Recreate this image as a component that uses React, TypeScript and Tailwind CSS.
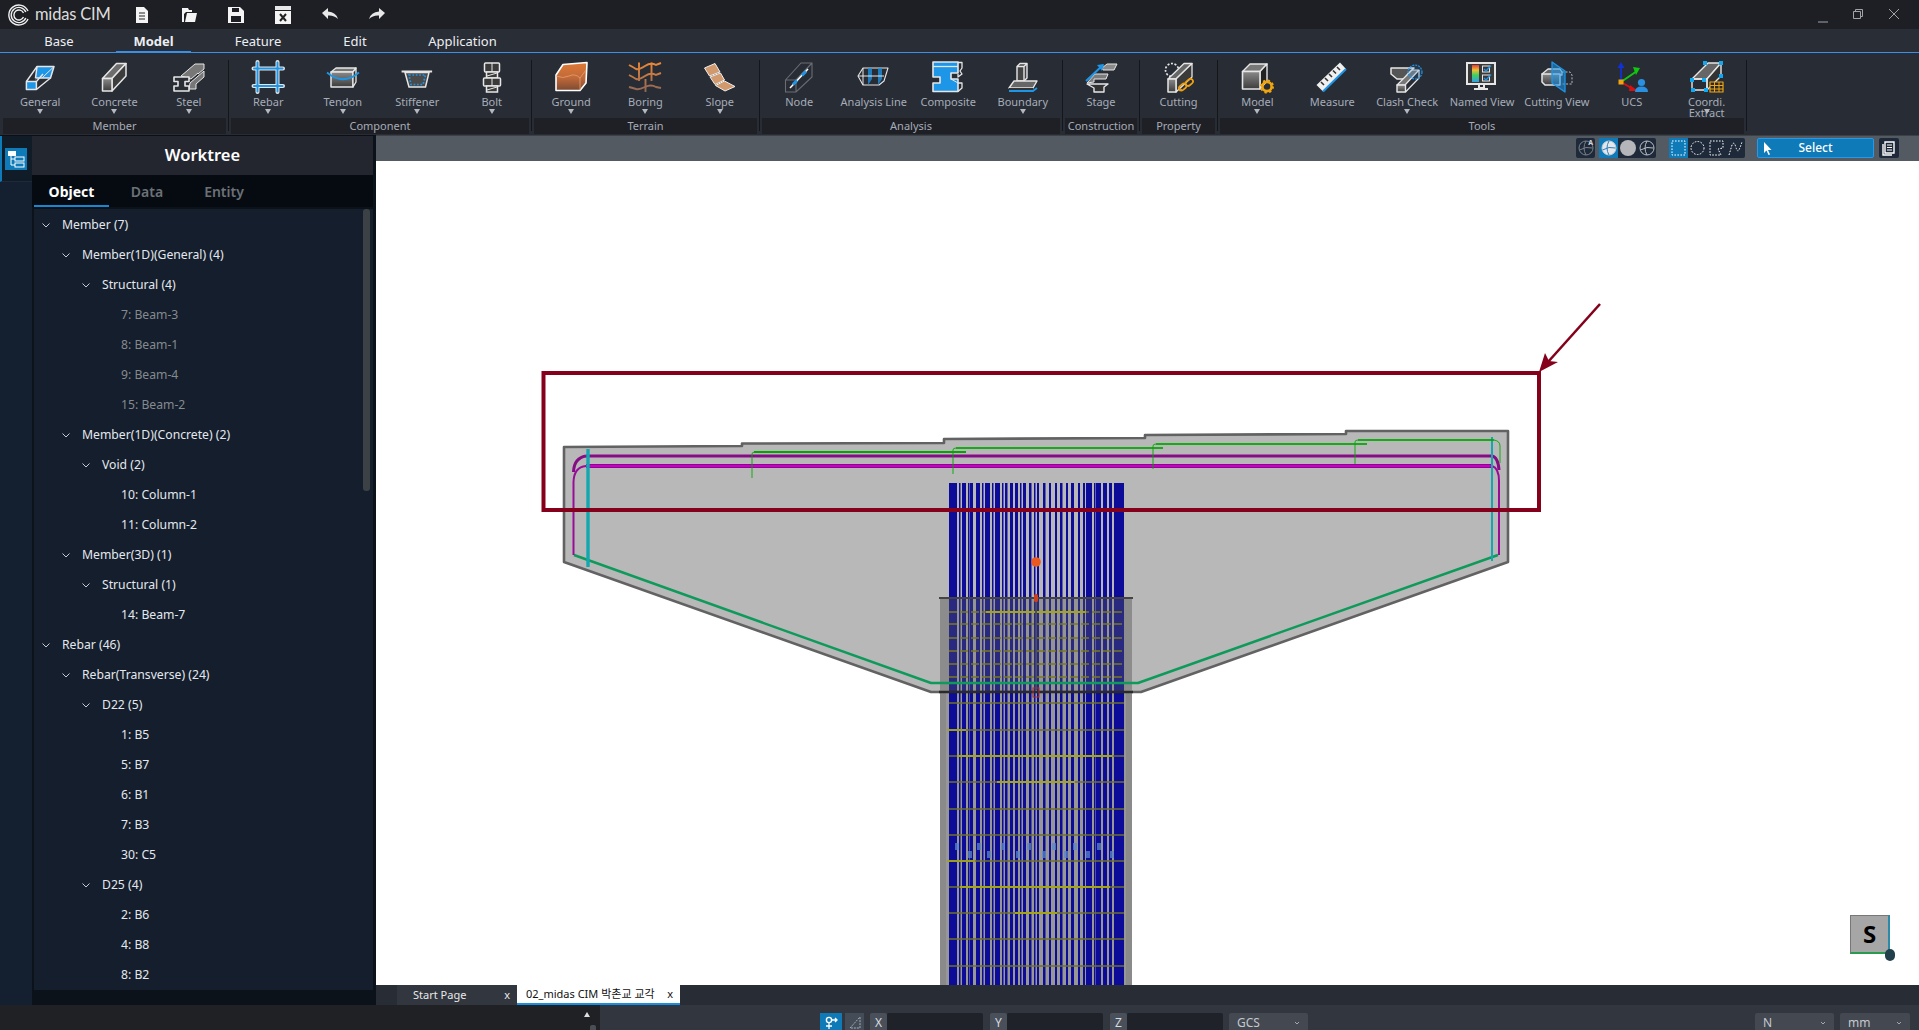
import React from "react";

const W = "#e6e6e6";
const B = "#1e96e8";
const G = "url(#gr)";

const Defs = () => (
  <svg className="absolute w-0 h-0">
    <defs>
      <linearGradient id="gr" x1="0" y1="0" x2="0" y2="1">
        <stop offset="0" stopColor="#8a8a8a" />
        <stop offset="1" stopColor="#3c3c3c" />
      </linearGradient>
      <linearGradient id="gnd" x1="0" y1="0" x2="0" y2="1">
        <stop offset="0" stopColor="#e07a35" />
        <stop offset="0.55" stopColor="#c0693a" />
        <stop offset="1" stopColor="#7c4a30" />
      </linearGradient>
      <linearGradient id="bor" gradientUnits="userSpaceOnUse" x1="0" y1="0" x2="0" y2="32">
        <stop offset="0" stopColor="#ef8a35" />
        <stop offset="1" stopColor="#8a6458" />
      </linearGradient>
      <linearGradient id="rain" x1="0" y1="0" x2="0" y2="1">
        <stop offset="0" stopColor="#e83a3a" />
        <stop offset="0.3" stopColor="#f0c030" />
        <stop offset="0.6" stopColor="#40d060" />
        <stop offset="1" stopColor="#30a0e8" />
      </linearGradient>
    </defs>
  </svg>
);

const icons: Record<string, React.ReactNode> = {
  General: (
    <g strokeLinejoin="round">
      <path d="M14 5.5H31L27.5 17H12.5Z" fill={B} stroke={W} strokeWidth="1.5" />
      <path d="M30.5 6L19 17" stroke={W} strokeWidth="1" />
      <path d="M3.4 20.5L14 5.5M13.4 28.5L27.5 17M13.4 20.5L20 13" fill="none" stroke={W} strokeWidth="1.4" />
      <path d="M13.4 20.5L12.5 17" stroke="#777" strokeWidth="1" />
      <rect x="3.4" y="20.5" width="10" height="8" fill={B} stroke={W} strokeWidth="1.5" />
    </g>
  ),
  Concrete: (
    <g strokeLinejoin="round" stroke={W} strokeWidth="1.5">
      <path d="M5.5 17.5L19.5 2.5H29L15 17.5Z" fill="#6d6d6d" />
      <path d="M15 17.5L29 2.5V15L15 30Z" fill="#3d3d3d" />
      <rect x="5.5" y="17.5" width="9.5" height="12.5" fill={G} />
    </g>
  ),
  Steel: (
    <g strokeLinejoin="round">
      <path d="M9 15L23 3H32V8L26 13V12L19 18ZM18 22L32 10V16L24 23L24 28H17Z" fill="#777" stroke={W} strokeWidth="1" />
      <path d="M2 16H17V20.5H13V25H17V30H2V25H6V20.5H2Z" fill="#2a2d33" stroke={W} strokeWidth="1.6" />
    </g>
  ),
  Rebar: (
    <g strokeLinecap="round" fill="none">
      <path d="M2.5 7.5H32M2.5 25H32M6.5 1V31M26.5 1V31" stroke={W} strokeWidth="4" />
      <path d="M3 7.5H31.5M3 25H31.5M6.5 1.5V30.5M26.5 1.5V30.5" stroke={B} strokeWidth="2" />
    </g>
  ),
  Tendon: (
    <g strokeLinejoin="round">
      <path d="M5 11L10 7H30L27 11Z" fill="#777" stroke={W} strokeWidth="1.3" />
      <path d="M5 11H27V26H5Z" fill={G} stroke={W} strokeWidth="1.5" />
      <path d="M27 11L30 7V21L27 26Z" fill="#333" stroke={W} strokeWidth="1.3" />
      <path d="M1 11.5Q17 25 33 11.5" fill="none" stroke={B} strokeWidth="1.8" />
    </g>
  ),
  Stiffener: (
    <g>
      <rect x="1.6" y="9.5" width="30.5" height="2" fill={W} />
      <path d="M5 11.5H29L25.5 26H9Z" fill="#4a4a4a" stroke={W} strokeWidth="1.5" />
      <path d="M9 14H25.5L23 23.5H11Z" fill="none" stroke={B} strokeWidth="1.7" strokeDasharray="1.7 1.7" />
    </g>
  ),
  Bolt: (
    <g fill="#3a3a3a" stroke={W} strokeWidth="1.5">
      <rect x="9.5" y="2" width="15" height="9" rx="1" />
      <path d="M17 2V11" strokeWidth="1" />
      <rect x="11.5" y="11" width="11" height="6" />
      <path d="M12 15L22 12" strokeWidth="1" />
      <rect x="8.5" y="17" width="17" height="8" rx="1" />
      <path d="M17 17V25" strokeWidth="1" />
      <rect x="11.5" y="25" width="11" height="6" />
      <path d="M12 29L22 26" strokeWidth="1" />
    </g>
  ),
  Ground: (
    <g strokeLinejoin="round">
      <path d="M9 3.5L33 1.5L32 22L26 29.5H2V14Z" fill="url(#gnd)" stroke="#fff" strokeWidth="1.6" />
      <path d="M2 15Q9 18 15 15T26 17L32 9M26 17V29" fill="none" stroke="#e8a070" strokeWidth="0.8" />
    </g>
  ),
  Boring: (
    <g fill="none" stroke="url(#bor)" strokeWidth="1.9">
      <path d="M1 4Q5 6 8 8Q11 9 17 5T28 4L33 2M1 14Q5 16 8 18Q11 19 17 15T28 14L33 12M1 26Q5 27 8 28Q11 29 17 26T28 26L33 27" />
      <path d="M11 1.5V20M23.5 1.5V20M17.5 18V31" />
    </g>
  ),
  Slope: (
    <g fill="#d29a6c" stroke="#f0f0f0" strokeWidth="1">
      <path d="M1.5 7L12 2.5L17 11L6.5 15Z" />
      <path d="M7 16L17.5 12L21.5 19L12 23.5Z" />
      <path d="M12.5 24.5L21.5 20L32 25.5L22 30Z" />
    </g>
  ),
  Node: (
    <g fill="none">
      <path d="M3.5 19L19 2H30V16L14 31H3.5ZM3.5 19H14V31M14 19L30 2" stroke="#6a6d72" strokeWidth="1.1" />
      <path d="M8 27L26 8" stroke="#fff" strokeWidth="1.5" />
      <path d="M11 23.5L15 19.5M20 14.5L24 10.5" stroke={B} strokeWidth="3" />
    </g>
  ),
  "Analysis Line": (
    <g fill="none" strokeLinejoin="round">
      <path d="M1 15L6 7H31L27 20L22 24H6Z" stroke={W} strokeWidth="1.1" />
      <path d="M11 7V24L15 18V7ZM21 7V24L25 18V7Z" fill={B} fillOpacity=".75" />
      <path d="M1 15H27M6 7L6 24" stroke={W} strokeWidth="1" />
    </g>
  ),
  Composite: (
    <g strokeLinejoin="round">
      <path d="M27 1.5H31V7L29 10L31 13L27 16V13M27 22H31V27L27 30.5" fill="none" stroke={W} strokeWidth="1.3" />
      <path d="M2 1H27V12H20V18H27V30.5H2V22H9V16H2Z" fill={B} stroke={W} strokeWidth="1.6" />
      <path d="M2 5.5H27" stroke={W} strokeWidth="1.3" />
      <path d="M20 18L27 22" stroke={W} strokeWidth="1" />
    </g>
  ),
  Boundary: (
    <g strokeLinejoin="round" stroke={W} strokeWidth="1.4">
      <path d="M11 5.5L14 2.5H21V17L18 20H11Z" fill="#444" />
      <path d="M11 5.5H18V20M18 5.5L21 2.5" fill="none" />
      <path d="M3 27L8 20H31L27 27Z" fill="#666" />
      <path d="M3 27H27V30H3Z" fill="#333" strokeWidth="0" />
      <path d="M3 30H27L31 27" fill="none" stroke={B} strokeWidth="1.8" />
    </g>
  ),
  Stage: (
    <g strokeLinejoin="round">
      <path d="M18 7L23 3H33L30 9H19Z" fill="#8a8a8a" stroke={W} strokeWidth="1" />
      <path d="M3 22L11 13H24L22 18H10V21Z" fill="#7a7a7a" stroke={W} strokeWidth="1" />
      <path d="M3 23H24L20 26V31H10V27Z" fill="#333" stroke={W} strokeWidth="1.4" />
      <path d="M2 20L19 4" stroke={B} strokeWidth="2" />
      <path d="M13 4L20 3L18 10Z" fill={B} />
    </g>
  ),
  Cutting: (
    <g strokeLinejoin="round" fill="none">
      <circle cx="10" cy="9" r="6.5" stroke={W} strokeWidth="1.7" strokeDasharray="2 1.6" />
      <path d="M6 18L22 2.5H30L14 18Z" fill="#666" stroke={W} strokeWidth="1.3" />
      <path d="M14 18L30 2.5V16L14 31Z" fill="#3a3a3a" stroke={W} strokeWidth="1.3" />
      <rect x="6" y="18" width="8" height="13" fill={G} stroke={W} strokeWidth="1.5" />
      <path d="M20 28L17 30" stroke="#f0a010" strokeWidth="1" />
      <rect x="16.5" y="24" width="8" height="5" rx="2.5" transform="rotate(-40 20 26)" stroke="#f0a010" strokeWidth="1.7" />
      <rect x="23" y="19" width="8" height="5" rx="2.5" transform="rotate(-40 27 21)" stroke="#f0a010" strokeWidth="1.7" />
    </g>
  ),
  Model: (
    <g strokeLinejoin="round">
      <path d="M2.5 10.5L10 3H27L20 10.5Z" fill="#777" stroke={W} strokeWidth="1.4" />
      <path d="M20 10.5L27 3V20L20 28Z" fill="#222" stroke={W} strokeWidth="1.4" />
      <rect x="2.5" y="10.5" width="17.5" height="17.5" fill={G} stroke={W} strokeWidth="1.6" />
      <circle cx="27" cy="25.5" r="4.6" fill="none" stroke="#f0a510" strokeWidth="2.6" />
      <circle cx="27" cy="25.5" r="6" fill="none" stroke="#f0a510" strokeWidth="2" strokeDasharray="2.3 2.4" />
    </g>
  ),
  Measure: (
    <g>
      <path d="M1.5 24L25 1.5L31 8L8 30.5Z" fill="#f0f0f0" />
      <path d="M8 30.5L31 8" stroke={B} strokeWidth="2" />
      <path d="M6 21L9 24M10 17L13 20M14 13L17 16M18 9.5L21 12.5M22 6L25 9" stroke="#333" strokeWidth="1.6" />
    </g>
  ),
  "Clash Check": (
    <g strokeLinejoin="round">
      <path d="M1 7H24L18 13L14 18H7L1 13Z" fill="#555" stroke={W} strokeWidth="1.5" />
      <path d="M7 24L22 9H29L15 24Z" fill="#777" stroke={W} strokeWidth="1.2" />
      <rect x="7" y="24" width="8.5" height="7" fill={G} stroke={W} strokeWidth="1.4" />
      <path d="M15.5 31L29 17V9" fill="none" stroke={W} strokeWidth="1.2" />
      <circle cx="25" cy="11" r="7" fill="#1e96e8" fillOpacity=".15" stroke={B} strokeWidth="1.2" strokeDasharray="2 1" />
    </g>
  ),
  "Named View": (
    <g>
      <rect x="2" y="2" width="28" height="21" fill="#3a3a3a" stroke={W} strokeWidth="2" />
      <rect x="7" y="4" width="7" height="17" fill="url(#rain)" />
      <rect x="17.5" y="5" width="7" height="6" fill="none" stroke={W} strokeWidth="1" />
      <rect x="17.5" y="14" width="7" height="6" fill="none" stroke={W} strokeWidth="1" />
      <path d="M19 8L21 10L26 4.5M19 17L21 19L26 13.5" fill="none" stroke={B} strokeWidth="1.3" />
      <path d="M14 23V27H19V23M9 28H23" stroke={W} strokeWidth="2" fill="none" />
    </g>
  ),
  "Cutting View": (
    <g strokeLinejoin="round">
      <path d="M22 11H30L32 14V23H22" fill="none" stroke="#bbb" strokeWidth="1" strokeDasharray="2 1.5" />
      <path d="M2 13L8 8H20L22 11V14H4Z" fill="#666" stroke={W} strokeWidth="1.3" />
      <path d="M2 13H20V24H5L2 21Z" fill={G} stroke={W} strokeWidth="1.5" />
      <path d="M12 1L25 10V31L12 22Z" fill={B} fillOpacity=".55" stroke={B} strokeWidth="1.3" />
    </g>
  ),
  UCS: (
    <g fill="none">
      <path d="M6 21V4" stroke="#1030d8" strokeWidth="1.8" />
      <path d="M2.5 7L6 1L9.5 7Z" fill="#1030d8" />
      <path d="M6 21L22 10" stroke="#10c810" strokeWidth="2" />
      <path d="M18 6L25 7L21 14Z" fill="#10c810" />
      <path d="M6 21L18 28" stroke="#d81010" strokeWidth="2" />
      <path d="M15 24L23 30H14Z" fill="#d81010" />
      <rect x="3.5" y="18.5" width="5" height="5" fill="#f0a510" />
      <circle cx="26.5" cy="21.5" r="3.6" fill="#2a90e0" />
      <path d="M20 31Q20 25.5 26.5 25.5T33 31Z" fill="#2a90e0" />
    </g>
  ),
  "Coordi.": (
    <g strokeLinejoin="round">
      <path d="M2 18L18 2H31L17 18Z" fill="#666" stroke={W} strokeWidth="1.4" />
      <path d="M17 18L31 2V15L17 29Z" fill="#333" stroke={W} strokeWidth="1.4" />
      <rect x="2" y="18" width="15" height="11" fill="none" stroke={W} strokeWidth="1.4" />
      <g fill="#10a8f0">
        <rect x="13" y="0" width="4" height="4" />
        <rect x="29" y="0" width="4" height="4" />
        <rect x="29" y="13" width="4" height="4" />
        <rect x="0" y="17" width="4" height="4" />
        <rect x="12" y="17" width="4" height="4" />
        <rect x="1" y="27" width="4" height="4" />
        <rect x="14" y="27" width="4" height="4" />
      </g>
      <rect x="20" y="21" width="13" height="10" fill="#2a2a2a" stroke="#f0a510" strokeWidth="1.2" />
      <path d="M20 24.5H33M20 28H33M24.5 21V31M29 21V31" stroke="#f0a510" strokeWidth="1" />
    </g>
  ),
};

type Item = { n: string; a?: boolean };
const groups: { t: string; w: string; items: Item[] }[] = [
  { t: "Member", w: "w-[223px]", items: [{ n: "General", a: true }, { n: "Concrete", a: true }, { n: "Steel", a: true }] },
  { t: "Component", w: "w-[298px]", items: [{ n: "Rebar", a: true }, { n: "Tendon", a: true }, { n: "Stiffener", a: true }, { n: "Bolt", a: true }] },
  { t: "Terrain", w: "w-[223px]", items: [{ n: "Ground", a: true }, { n: "Boring", a: true }, { n: "Slope", a: true }] },
  { t: "Analysis", w: "w-[298px]", items: [{ n: "Node" }, { n: "Analysis Line" }, { n: "Composite" }, { n: "Boundary", a: true }] },
  { t: "Construction", w: "w-[72px]", items: [{ n: "Stage" }] },
  { t: "Property", w: "w-[73px]", items: [{ n: "Cutting" }] },
  { t: "Tools", w: "w-[524px]", items: [{ n: "Model", a: true }, { n: "Measure" }, { n: "Clash Check", a: true }, { n: "Named View" }, { n: "Cutting View" }, { n: "UCS" }, { n: "Coordi.", a: true }] },
];

const Arrow = () => (
  <svg width="6" height="5" viewBox="0 0 6 5" className="block">
    <path d="M0 0H6L3 5Z" fill="#b4b8c0" />
  </svg>
);

const RibbonItem = ({ it }: { it: Item }) => (
  <div className="flex-1 min-w-0 relative flex flex-col items-center pt-[8px]">
    <svg width="34" height="32" viewBox="0 0 34 32" className="block overflow-visible mb-[2px]">
      {icons[it.n]}
    </svg>
    {it.n === "Coordi." ? (
      <div className="h-[14px] pt-[1px] text-center text-[11px] leading-[11px] text-[#a6acb8] whitespace-nowrap">
        Coordi.
        <br />
        Extract
      </div>
    ) : (
      <div className="h-[14px] text-[11px] leading-[14px] text-[#a6acb8] whitespace-nowrap">{it.n}</div>
    )}
    {it.a && <Arrow />}
  </div>
);

const Sep = () => <div className="w-px mx-[2px] mt-[7px] h-[71px] bg-[#14161a]" />;

const tree: [number, string, boolean?][] = [
  [0, "Member (7)"],
  [1, "Member(1D)(General) (4)"],
  [2, "Structural (4)"],
  [3, "7: Beam-3", true],
  [3, "8: Beam-1", true],
  [3, "9: Beam-4", true],
  [3, "15: Beam-2", true],
  [1, "Member(1D)(Concrete) (2)"],
  [2, "Void (2)"],
  [3, "10: Column-1"],
  [3, "11: Column-2"],
  [1, "Member(3D) (1)"],
  [2, "Structural (1)"],
  [3, "14: Beam-7"],
  [0, "Rebar (46)"],
  [1, "Rebar(Transverse) (24)"],
  [2, "D22 (5)"],
  [3, "1: B5"],
  [3, "5: B7"],
  [3, "6: B1"],
  [3, "7: B3"],
  [3, "30: C5"],
  [2, "D25 (4)"],
  [3, "2: B6"],
  [3, "4: B8"],
  [3, "8: B2"],
];
const indent = ["pl-[6px]", "pl-[26px]", "pl-[46px]", "pl-[87px]"];

const Chevron = () => (
  <svg width="12" height="12" viewBox="0 0 12 12" className="mr-[10px] shrink-0">
    <path d="M2.5 4.5L6 8L9.5 4.5" fill="none" stroke="#c8ccd2" strokeWidth="1" />
  </svg>
);

const blue: [number, number][] = [
  [949, 8], [959, 1.5], [962, 4], [968, 1.5], [970, 3], [976, 4], [982, 1.5], [985, 5], [992, 1.5], [995, 5], [1002, 1.5],
  [1005, 2.5], [1010, 3], [1015, 3], [1020, 1.5], [1023, 3], [1029, 2.5], [1034, 1.5], [1037, 2], [1043, 2.5], [1049, 2],
  [1055, 2], [1060, 2.5], [1066, 2], [1071, 3], [1078, 2], [1083, 2], [1086, 6], [1094, 1.5], [1096, 5], [1103, 4], [1109, 3],
  [1114, 10],
];

const yel: [number, string, [number, number]?][] = [
  [612, "d", [986, 1086]], [624, "d"], [638, "d"], [651, "d"], [664, "d"], [677, "d"],
  [703, "s"], [730, "s", [947, 966]], [756, "s", [957, 1113]], [782, "s", [997, 1075]], [809, "s"], [835, "s"],
  [861, "s", [947, 975]], [887, "s", [960, 1110]], [913, "s", [1015, 1057]], [939, "s"], [966, "s"],
];

const marks = [955, 968, 977, 987, 1001, 1016, 1027, 1042, 1052, 1064, 1073, 1086, 1097, 1110];

const Scene = () => (
  <svg viewBox="376 161 1543 824" width="1543" height="824" className="absolute inset-0">
    <path
      d="M564 447L742 446L742 443.5L944 443L944 439L1145 438L1145 435L1346 434L1346 431L1508 431L1508 562L1141 692L931 692L564 562Z"
      fill="#b8b8b8"
      stroke="#626262"
      strokeWidth="2.6"
      strokeLinejoin="round"
    />
    <rect x="940" y="692" width="192" height="293" fill="#979797" />
    <rect x="940" y="692" width="6" height="293" fill="#8a8a8a" />
    <rect x="1126" y="692" width="6" height="293" fill="#8a8a8a" />
    {blue.map(([x, w]) => (
      <rect key={x} x={x} y="483" width={w} height="502" fill="#0c0c98" />
    ))}
    <rect x="940" y="598" width="192" height="94" fill="#5a5a5a" fillOpacity=".38" />
    <rect x="940" y="598" width="9" height="94" fill="#8c8c8c" />
    <rect x="1124" y="598" width="8" height="94" fill="#8c8c8c" />
    {yel.map(([y, k, b]) => (
      <g key={y}>
        <path
          d={`M949 ${y}H1124`}
          stroke={k === "d" ? "#7a7a20" : "#70702a"}
          strokeWidth="1.3"
          strokeDasharray={k === "d" ? "8 3" : undefined}
        />
        {b && <path d={`M${b[0]} ${y}H${b[1]}`} stroke="#a5a512" strokeWidth="1.8" />}
      </g>
    ))}
    {marks.map((x, i) => (
      <rect key={x} x={x} y={i % 2 ? 851 : 843} width="4" height="7" fill="#5a86c8" fillOpacity=".75" />
    ))}
    <path d="M1036 600V690" stroke="#3a3a55" strokeWidth="1.5" />
    <path d="M939 598H1133" stroke="#444" strokeWidth="2" />
    <path d="M939 692H1133" stroke="#2a2a2a" strokeWidth="2.4" />
    <path d="M574 555L931 683H1138L1498 555" fill="none" stroke="#0e9a5a" strokeWidth="2.4" strokeLinejoin="round" />
    <path d="M586 456H1492Q1498 457 1499 470" fill="none" stroke="#860c86" strokeWidth="3" />
    <path d="M586 456Q574 458 573.5 472" fill="none" stroke="#860c86" strokeWidth="3" />
    <path d="M573.5 555V482Q574 467 586 466H1492Q1499 468 1499 481V555" fill="none" stroke="#980c98" strokeWidth="2" />
    <path d="M586 466H1492" stroke="#7a0a7a" strokeWidth="4" />
    <path d="M586 466H1492" stroke="#c800c8" strokeWidth="2.4" />
    <path d="M588 449V567" stroke="#12a8b0" strokeWidth="3.4" />
    <path d="M1492 437V561" stroke="#12a8b0" strokeWidth="2" />
    <g fill="none" stroke="#00a800">
      <path d="M752 478V454Q752 452 755 452H966" strokeWidth="0.9" />
      <path d="M754 452H966" strokeWidth="2.2" />
      <path d="M953 474V450Q953 448 956 448H1163" strokeWidth="0.9" />
      <path d="M956 448H1163" strokeWidth="1.6" />
      <path d="M1153 469V446Q1153 444 1156 444H1367" strokeWidth="0.9" />
      <path d="M1156 444H1367" strokeWidth="1.6" />
      <path d="M1355 464V442Q1355 440 1358 440H1494Q1500 441 1500 446V463" strokeWidth="0.9" />
      <path d="M1358 440H1494" strokeWidth="1.6" />
    </g>
    <circle cx="1036" cy="562" r="4.8" fill="#e85a20" />
    <rect x="1034" y="594" width="4" height="8" rx="1.5" fill="#c8401e" />
    <rect x="1033" y="688" width="6" height="9" fill="none" stroke="#a03030" strokeWidth="1" />
    <rect x="543.5" y="373" width="995.5" height="137" fill="none" stroke="#85001a" strokeWidth="4" />
    <path d="M1600 304L1548 362" stroke="#85001a" strokeWidth="2.6" />
    <path d="M1539 372L1545 353L1549 361L1558 362Z" fill="#85001a" />
  </svg>
);

const Globe = ({ fill, c = "#c8ccd2" }: { fill?: string; c?: string }) => (
  <svg width="16" height="16" viewBox="0 0 16 16">
    <circle cx="8" cy="8" r="7" fill={fill ?? "none"} stroke={c} strokeWidth="1" />
    <path d="M1.5 10Q8 6 14.5 8M8 1Q4 8 8 15" fill="none" stroke={fill ? "#2a80bc" : c} strokeWidth="1" />
  </svg>
);

const TBtn = ({ children, on }: { children: React.ReactNode; on?: boolean }) => (
  <div className={`w-[19px] h-[20px] flex items-center justify-center ${on ? "bg-[#0f7ab8]" : ""}`}>{children}</div>
);

const Dot = ({ children }: { children: React.ReactNode }) => (
  <svg width="15" height="16" viewBox="0 0 15 16">
    <g fill="none" stroke="#fff" strokeWidth="1" strokeDasharray="1.6 1.4">
      {children}
    </g>
  </svg>
);

const TitleIcon = ({ children }: { children: React.ReactNode }) => (
  <svg width="18" height="18" viewBox="0 0 18 18" className="block">
    {children}
  </svg>
);

const Sel = ({ t, w }: { t: string; w: string }) => (
  <div className={`${w} h-[17px] bg-[#434851] rounded-t-[2px] flex items-center justify-between px-[8px] pt-[3px] text-[12px] text-[#c4c8ce]`}>
    <span>{t}</span>
    <svg width="6" height="4" viewBox="0 0 6 4">
      <path d="M1 1L3 3L5 1" fill="none" stroke="#b0b4ba" strokeWidth=".9" />
    </svg>
  </div>
);

const Coord = ({ t, w }: { t: string; w: string }) => (
  <div className={`flex h-[17px] ${w}`}>
    <div className="w-[17px] bg-[#4a505a] text-[12px] text-[#d8dce0] flex items-center justify-center pt-[3px] rounded-t-[2px]">{t}</div>
    <div className="flex-1 bg-[#1f2329] rounded-t-[2px]" />
  </div>
);

export default function App() {
  return (
    <div className="h-screen w-full overflow-hidden flex flex-col bg-[#1f2125] font-['Noto_Sans','Noto_Sans_CJK_KR',sans-serif] text-white">
      <Defs />
      {/* title bar */}
      <div className="h-[29px] shrink-0 bg-[#1d1f24] flex items-center">
        <svg width="24" height="24" viewBox="0 0 24 24" className="ml-[7px]">
          <g fill="none" stroke="#f0f0f0" strokeWidth="1.4">
            <path d="M21 8A10 10 0 1 0 21 16" />
            <path d="M18.8 9A7.6 7.6 0 1 0 18.8 15" />
            <path d="M16.5 10A5 5 0 1 0 16.5 14" />
          </g>
        </svg>
        <span className="ml-[4px] w-[80px] text-[16.5px] tracking-[-0.2px] text-[#dcdcdc] font-['Lato',sans-serif]">midas CIM</span>
        <div className="ml-[18px] flex gap-[29px]">
          <TitleIcon>
            <path d="M3 1H11L15 5V17H3Z" fill="#f4f4f4" />
            <path d="M6 7H12M6 10H12M6 13H12" stroke="#222" strokeWidth="1.2" />
          </TitleIcon>
          <TitleIcon>
            <path d="M2 2H8L9 4H12V6H6L4 8V16H2Z" fill="#f4f4f4" />
            <path d="M5 16L7 7H17L15 16Z" fill="#f4f4f4" />
          </TitleIcon>
          <TitleIcon>
            <path d="M1 1H13L17 5V17H1Z" fill="#f4f4f4" />
            <rect x="5" y="2" width="7" height="4" fill="#1d1f24" />
            <rect x="4" y="10" width="10" height="6" fill="#1d1f24" />
          </TitleIcon>
          <TitleIcon>
            <rect x="1" y="0" width="16" height="4" fill="#e8e8e8" />
            <rect x="1" y="5" width="16" height="13" fill="#f4f4f4" />
            <path d="M6 8L12 15M12 8L6 15" stroke="#222" strokeWidth="2" />
          </TitleIcon>
          <TitleIcon>
            <path d="M1 7L7 2V5.5Q15 6 17 13Q13 9 7 9.5V13Z" fill="#e8e8e8" />
          </TitleIcon>
          <TitleIcon>
            <path d="M17 7L11 2V5.5Q3 6 1 13Q5 9 11 9.5V13Z" fill="#e8e8e8" />
          </TitleIcon>
        </div>
        <div className="ml-auto flex items-start h-full">
          <svg width="12" height="12" viewBox="0 0 12 12" className="mt-[11px] mr-[23px]">
            <path d="M1 11H11" stroke="#a0a4aa" strokeWidth="1" />
          </svg>
          <svg width="12" height="12" viewBox="0 0 12 12" className="mt-[8px] mr-[24px]">
            <path d="M1.5 3.5H8.5V10.5H1.5ZM3.5 3.5V1.5H10.5V8.5H8.5" fill="none" stroke="#a0a4aa" strokeWidth="1" />
          </svg>
          <svg width="12" height="12" viewBox="0 0 12 12" className="mt-[8px] mr-[19px]">
            <path d="M1 1L11 11M11 1L1 11" stroke="#a0a4aa" strokeWidth="1" />
          </svg>
        </div>
      </div>
      {/* tab bar */}
      <div className="h-[24px] shrink-0 bg-[#292d36] border-b border-[#3a8fe8] flex items-stretch text-[13px] text-[#eceff2] leading-[24px]">
        <div className="w-[116px] flex justify-center">
          <span className="ml-[2px]">Base</span>
        </div>
        <div className="w-[75px] h-[24px] text-center font-bold border-b-[2px] border-[#3a8fe8]">Model</div>
        <div className="w-[134px] text-center">Feature</div>
        <div className="w-[60px] text-center">Edit</div>
        <div className="w-[155px] text-center">Application</div>
      </div>
      {/* ribbon */}
      <div className="h-[82px] shrink-0 bg-[#282c35] flex pl-[3px]">
        {groups.map((g) => (
          <React.Fragment key={g.t}>
            <div className={`${g.w} flex flex-col h-[81px]`}>
              <div className="h-[65px] flex">
                {g.items.map((it) => (
                  <RibbonItem key={it.n} it={it} />
                ))}
              </div>
              <div className="h-[16px] bg-[#1e2026] text-center text-[11px] leading-[16px] text-[#a6acb8] whitespace-nowrap">{g.t}</div>
            </div>
            <Sep />
          </React.Fragment>
        ))}
      </div>
      {/* main */}
      <div className="flex-1 min-h-0 flex">
        {/* rail */}
        <div className="w-[32px] shrink-0 bg-[#142030] border-t border-[#0c1016]">
          <div className="h-[46px] border-l-[2px] border-[#0f7ab8] bg-[#111c29] border-b border-b-[#1c2a3a] pl-[3px] pt-[12px]">
            <div className="w-[22px] h-[22px] bg-[#0f7ab8] flex items-center justify-center">
              <svg width="18" height="18" viewBox="0 0 18 18">
                <rect x="1" y="1" width="8" height="5" fill="#fff" />
                <rect x="8" y="7" width="9" height="4" fill="none" stroke="#fff" />
                <rect x="8" y="13" width="9" height="4" fill="none" stroke="#fff" />
                <path d="M4 6V15H8M4 9H8" fill="none" stroke="#fff" />
              </svg>
            </div>
          </div>
        </div>
        {/* panel */}
        <div className="w-[344px] shrink-0 bg-[#0c1219] flex flex-col border-t border-[#0c1016]">
          <div className="h-[39px] w-[341px] shrink-0 bg-[#23262f] text-center text-[16.5px] font-semibold leading-[37px] text-white">Worktree</div>
          <div className="h-[32px] shrink-0 w-[341px] bg-[#060b12] flex pl-[2px] text-[14px] font-semibold leading-[33px] text-[#6c7177]">
            <div className="w-[75px] h-[32px] text-center font-bold text-white border-b-[2px] border-[#1a86d0]">Object</div>
            <div className="w-[76px] text-center">Data</div>
            <div className="w-[78px] text-center">Entity</div>
          </div>
          <div className="h-[781px] w-[339px] ml-[2px] mt-[2px] pt-[1px] shrink-0 bg-[#141e2c] relative overflow-hidden">
            {tree.map(([l, t, dim], i) => (
              <div key={i} className={`h-[30px] flex items-center text-[12.2px] ${indent[l]} ${dim ? "text-[#858a90]" : "text-[#e4e8ee]"}`}>
                {l < 3 && <Chevron />}
                <span className="whitespace-nowrap">{t}</span>
              </div>
            ))}
            <div className="absolute right-[3px] top-0 w-[7px] h-[282px] bg-[#3c4145] rounded-[3px]" />
          </div>
        </div>
        {/* viewport */}
        <div className="flex-1 min-w-0 flex flex-col">
          <div className="h-[26px] shrink-0 bg-[#535a62] border-t border-[#3c4148] flex items-start pt-[2px] pl-[1200px]">
            <div className="w-[19px] h-[20px] bg-[#1e2a3a] rounded-[2px] flex items-center justify-center relative">
              <Globe c="#7a8088" />
              <span className="absolute right-[2px] top-[1px] text-[7px] leading-[8px] font-bold text-[#d0d4d8]">A</span>
            </div>
            <div className="ml-[4px] flex bg-[#1e2a3a] rounded-[2px]">
              <TBtn on>
                <Globe fill="#e4e6ea" />
              </TBtn>
              <TBtn>
                <div className="w-[16px] h-[16px] rounded-full bg-[#b4b6ba]" />
              </TBtn>
              <TBtn>
                <Globe c="#b8bcc2" />
              </TBtn>
            </div>
            <div className="ml-[13px] flex bg-[#1e2a3a] rounded-[2px]">
              <TBtn on>
                <Dot>
                  <rect x="1" y="1" width="13" height="14" />
                </Dot>
              </TBtn>
              <TBtn>
                <Dot>
                  <circle cx="7.5" cy="8" r="6.5" />
                </Dot>
              </TBtn>
              <TBtn>
                <Dot>
                  <path d="M1 1H14V8L9 9L12 15H1Z" />
                </Dot>
              </TBtn>
              <TBtn>
                <Dot>
                  <path d="M1 15L4 5Q6 1 7.5 6T10 11T14 2" />
                </Dot>
              </TBtn>
            </div>
            <div className="ml-[12px] w-[117px] h-[20px] bg-[#0f7ab8] border border-[#2a98e8] rounded-[2px] flex items-center relative text-[12px] font-medium justify-center">
              <svg width="9" height="14" viewBox="0 0 9 14" className="absolute left-[5px] top-[3px]">
                <path d="M1 0V11L3.5 8.5L5.5 13L7 12.5L5 8H8.5Z" fill="#fff" />
              </svg>
              Select
            </div>
            <div className="ml-[5px] w-[20px] h-[20px] bg-[#1e2a3a] rounded-[2px] flex items-center justify-center">
              <svg width="14" height="15" viewBox="0 0 14 15">
                <path d="M3 1H12V12H3Z" fill="none" stroke="#fff" strokeWidth="1.4" />
                <path d="M5 4H10M5 6.5H10M5 9H10" stroke="#fff" strokeWidth="1" />
                <path d="M1 3V14H10" fill="none" stroke="#fff" strokeWidth="1.4" />
              </svg>
            </div>
          </div>
          <div className="h-[824px] shrink-0 bg-white relative overflow-hidden">
            <Scene />
            <div className="absolute left-[1474px] top-[754px] w-[40px] h-[39px] bg-[#a6a6a6] border-t border-l border-[#777] border-r-2 border-r-[#2a8aa8] border-b-2 border-b-[#2a9a50] flex items-center justify-center text-[24px] font-bold text-black">
              S
            </div>
            <div className="absolute left-[1509px] top-[788px] w-[10px] h-[12px] rounded-full bg-[#22404c]" />
          </div>
          {/* doc tabs */}
          <div className="h-[20px] shrink-0 bg-[#282c35] flex pl-[21px] text-[11px]">
            <div className="w-[120px] bg-[#31363f] flex items-center justify-between pl-[16px] pr-[7px] text-[#e8e8e8]">
              <span>Start Page</span>
              <span>x</span>
            </div>
            <div className="w-[163px] bg-white border-b-[2px] border-[#1a8fe0] flex items-center justify-between pl-[9px] pr-[7px] text-[#111] whitespace-nowrap">
              <span>02_midas CIM 박촌교 교각</span>
              <span>x</span>
            </div>
          </div>
        </div>
      </div>
      {/* status */}
      <div className="h-[25px] shrink-0 flex">
        <div className="w-[600px] shrink-0 bg-[#1f2125] relative">
          <svg width="6" height="5" viewBox="0 0 6 5" className="absolute left-[584px] top-[7px]">
            <path d="M0 5H6L3 0Z" fill="#e0e0e0" />
          </svg>
          <div className="absolute left-[590px] top-[20px] w-[6px] h-[5px] rounded-t-[2px] bg-[#4a4e55]" />
        </div>
        <div className="flex-1 bg-[#31363f] flex items-start pt-[8px] pl-[220px] pr-[9px]">
          <div className="w-[22px] h-[17px] bg-[#0f7ab8] flex items-center justify-center">
            <svg width="14" height="14" viewBox="0 0 14 14">
              <circle cx="5" cy="5" r="2.6" fill="none" stroke="#fff" strokeWidth="1.4" />
              <path d="M5 8V14M2 11H8M8 5H13M11 3L13 5L11 7" fill="none" stroke="#fff" strokeWidth="1.3" />
            </svg>
          </div>
          <div className="ml-[3px] w-[19px] h-[17px] bg-[#444c58] flex items-center justify-center">
            <svg width="14" height="14" viewBox="0 0 14 14">
              <path d="M2 13L12 2V13Z" fill="none" stroke="#a4aebb" strokeWidth="1" strokeDasharray="2 1" />
            </svg>
          </div>
          <div className="w-[6px]" />
          <Coord t="X" w="w-[113px]" />
          <div className="w-[7px]" />
          <Coord t="Y" w="w-[113px]" />
          <div className="w-[7px]" />
          <Coord t="Z" w="w-[113px]" />
          <div className="w-[6px]" />
          <Sel t="GCS" w="w-[79px]" />
          <div className="ml-auto flex gap-[6px]">
            <Sel t="N" w="w-[79px]" />
            <Sel t="mm" w="w-[70px]" />
          </div>
        </div>
      </div>
    </div>
  );
}
